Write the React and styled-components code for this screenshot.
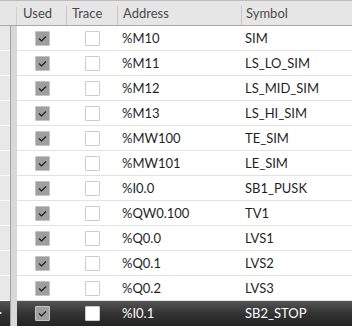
import React from "react";
import styled, { createGlobalStyle } from "styled-components";

const Global = createGlobalStyle`
  html, body { margin: 0; padding: 0; background: #ffffff; }
  body { font-family: Lato, "Noto Sans", sans-serif; }
`;

const Table = styled.div`
  width: 352px;
  height: 328px;
  overflow: hidden;
  background: #ffffff;
  display: flex;
  flex-direction: column;
`;

const COLS = "10px 7px 49px 51px 124px 1fr";

const HeaderRow = styled.div`
  display: grid;
  grid-template-columns: ${COLS};
  height: 24px;
  border-top: 1px solid #bdbdbd;
  border-bottom: 1px solid #a9a9a9;
  background: #e6e6e6;
  flex: none;
`;

const HeadCorner = styled.div`
  grid-column: span 2;
  border-right: 1px solid #cfcfcf;
  margin: 6px 0 0;
`;

const HeadCell = styled.div`
  display: flex;
  align-items: center;
  padding-left: ${(p) => p.$pad || 5}px;
  font-size: 13px;
  color: #4a4a4a;
  border-left: ${(p) => (p.$sep ? "1px solid #c6c6c6" : "none")};
  margin-top: 5px;
  padding-bottom: 5px;
  white-space: nowrap;
  overflow: hidden;
`;

const Row = styled.div`
  display: grid;
  grid-template-columns: ${COLS};
  height: 25px;
  flex: none;
  background: ${(p) =>
    p.$sel ? "linear-gradient(#555555, #333333 50%, #242424)" : "#ffffff"};
  color: ${(p) => (p.$sel ? "#ffffff" : "#1f1f1f")};
`;

const RowHead = styled.div`
  position: relative;
  background: ${(p) => (p.$sel ? "transparent" : "#e8e8e8")};
  border-bottom: 1px solid ${(p) => (p.$sel ? "transparent" : "#fafafa")};
`;

const Arrow = styled.div`
  position: absolute;
  left: -3px;
  top: 9px;
  width: 0;
  height: 0;
  border-top: 3px solid transparent;
  border-bottom: 3px solid transparent;
  border-left: 5px solid #ffffff;
`;

const Gutter = styled.div`
  background: #d8d8d8;
  border-left: 1px solid #a3a3a3;
`;

const Cell = styled.div`
  display: flex;
  align-items: center;
  justify-content: ${(p) => p.$justify || "flex-start"};
  padding-left: ${(p) => p.$pad || 0}px;
  font-size: 13px;
  border-bottom: 1px solid ${(p) => (p.$sel ? "transparent" : "#e2e2e2")};
  white-space: nowrap;
  overflow: hidden;
`;

const CheckBox = styled.div`
  width: 15px;
  height: 15px;
  box-sizing: border-box;
  border: 1px solid ${(p) => (p.$checked ? "#c4c4c4" : "#cdcdcd")};
  background: ${(p) => (p.$checked ? "#9f9f9f" : "#ffffff")};
  border-radius: 1px;
  display: flex;
  align-items: center;
  justify-content: center;
`;

const Check = () => (
  <svg width="13" height="13" viewBox="0 0 13 13">
    <polyline
      points="3,6.5 5.5,9 10,4.5"
      fill="none"
      stroke="#1a1a1a"
      strokeWidth="1.1"
    />
  </svg>
);

const rows = [
  ["%M10", "SIM"],
  ["%M11", "LS_LO_SIM"],
  ["%M12", "LS_MID_SIM"],
  ["%M13", "LS_HI_SIM"],
  ["%MW100", "TE_SIM"],
  ["%MW101", "LE_SIM"],
  ["%I0.0", "SB1_PUSK"],
  ["%QW0.100", "TV1"],
  ["%Q0.0", "LVS1"],
  ["%Q0.1", "LVS2"],
  ["%Q0.2", "LVS3"],
  ["%I0.1", "SB2_STOP"],
];

export default function App() {
  return (
    <>
      <Global />
      <Table>
        <HeaderRow>
          <HeadCorner />
          <HeadCell $pad={6}>Used</HeadCell>
          <HeadCell $sep>Trace</HeadCell>
          <HeadCell $sep>Address</HeadCell>
          <HeadCell $sep $pad={4}>Symbol</HeadCell>
        </HeaderRow>
        {rows.map(([addr, sym], i) => {
          const sel = i === rows.length - 1;
          return (
            <Row key={addr} $sel={sel}>
              <RowHead $sel={sel}>{sel && <Arrow />}</RowHead>
              <Gutter />
              <Cell $sel={sel} $pad={18}>
                <CheckBox $checked>
                  <Check />
                </CheckBox>
              </Cell>
              <Cell $sel={sel} $pad={19}>
                <CheckBox />
              </Cell>
              <Cell $sel={sel} $pad={5}>
                {addr}
              </Cell>
              <Cell $sel={sel} $pad={4}>
                {sym}
              </Cell>
            </Row>
          );
        })}
      </Table>
    </>
  );
}
